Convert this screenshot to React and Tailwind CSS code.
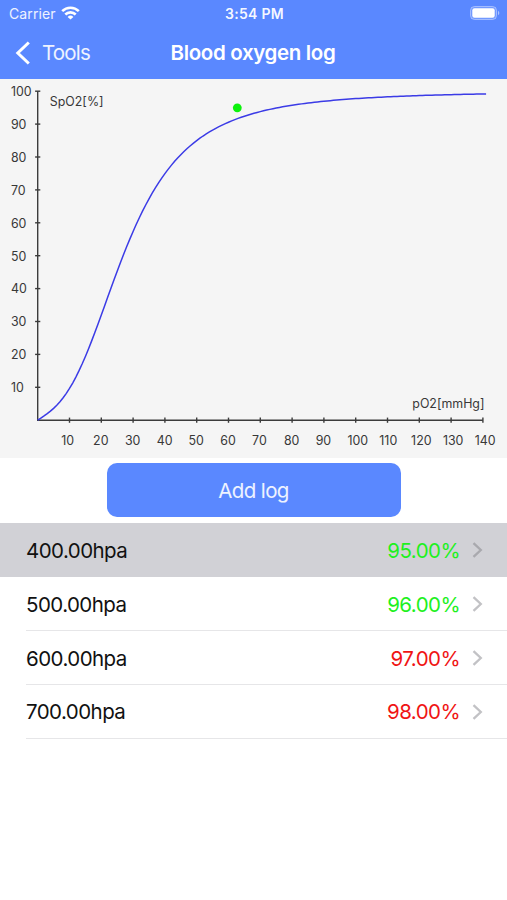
import React from 'react';

const logs = [
  { pressure: '400.00hpa', spo2: '95.00%', ok: true, selected: true },
  { pressure: '500.00hpa', spo2: '96.00%', ok: true },
  { pressure: '600.00hpa', spo2: '97.00%', ok: false },
  { pressure: '700.00hpa', spo2: '98.00%', ok: false },
];

// Chart geometry, in pixels inside the plot
const X0 = 37.7;
const Y0 = 341.2;
const STEP_X = 31.8;
const STEP_Y = 32.9;

// Severinghaus oxygen dissociation curve, result in percent
const saturation = (p) => {
  const k = p * p * p + 150 * p;
  return (100 * k) / (k + 23400);
};

const curvePoints = () => {
  const points = [];
  for (let p = 0; p <= 141; p += 1) {
    const x = X0 + (p / 10) * STEP_X;
    const y = Y0 - (saturation(p) / 10) * STEP_Y;
    points.push(`${x.toFixed(2)},${y.toFixed(2)}`);
  }
  return points.join(' ');
};

const StatusBar = () => (
  <div className="grid h-[27px] grid-cols-3 items-center pr-[7px] pl-[9px] text-[14px]">
    <div className="flex items-center gap-[5px]">
      <span className="pb-px tracking-[0.1px] text-white/90">Carrier</span>
      <svg className="-mt-px" width="19" height="14" viewBox="0 0 19 14" fill="none" stroke="white" strokeWidth="2.6">
        <path d="M1.2 5.2a11.8 11.8 0 0 1 16.6 0" />
        <path d="M4.3 8.5a7.4 7.4 0 0 1 10.4 0" />
        <path d="M9.5 13.6L6.6 10.9a4.1 4.1 0 0 1 5.8 0z" fill="white" stroke="none" />
      </svg>
    </div>
    <span className="pb-px text-center font-semibold tracking-[0.3px] whitespace-nowrap text-white/95">3:54 PM</span>
    <svg className="-mt-px justify-self-end" width="30" height="14" viewBox="0 0 30 14">
      <rect x="0.5" y="0.5" width="26" height="13" rx="4" fill="white" fillOpacity="0.15" stroke="white" strokeOpacity="0.4" />
      <rect x="2.3" y="2.3" width="22.4" height="9.4" rx="2.2" fill="white" />
      <path d="M28 4.8v4.4c1.8-.8 1.8-3.6 0-4.4z" fill="white" fillOpacity="0.5" />
    </svg>
  </div>
);

const NavBar = () => (
  <div className="grid h-[52px] grid-cols-[1fr_auto_1fr] items-center pr-[16px] pl-[15px]">
    <div className="flex items-center gap-[11px]">
      <svg className="-mt-px" width="16" height="24" viewBox="0 0 16 24" fill="none" stroke="white" strokeWidth="3">
        <path d="M13.8 1.5L2.8 12l11 10.5" />
      </svg>
      <span className="text-[20.5px] tracking-[-0.8px] text-white/90">Tools</span>
    </div>
    <h1 className="text-[20.5px] font-semibold tracking-[-0.35px]">Blood oxygen log</h1>
  </div>
);

const SaturationChart = () => {
  const xTicks = Array.from({ length: 14 }, (_, i) => i + 1);
  const yTicks = Array.from({ length: 10 }, (_, i) => i + 1);

  return (
    <svg className="block bg-[#f5f5f5]" width="507" height="379" viewBox="0 0 507 379">
      <g stroke="#3c3c3c" strokeWidth="1.4">
        <path d={`M${X0} ${Y0 - 10 * STEP_Y}V${Y0}H${X0 + 14 * STEP_X}`} fill="none" />
        {xTicks.map((i) => (
          <path key={i} d={`M${X0 + i * STEP_X} ${Y0 - 2.6}v5.2`} />
        ))}
        {yTicks.map((i) => (
          <path key={i} d={`M${X0 - 2.6} ${Y0 - i * STEP_Y}h5.2`} />
        ))}
      </g>
      <g fill="#383838" fontSize="12.4">
        {xTicks.map((i) => (
          <text key={i} x={61.3 + (i - 1) * STEP_X} y="365.5">{i * 10}</text>
        ))}
        {yTicks.map((i) => (
          <text key={i} x="10.9" y={Y0 + 4.8 - i * STEP_Y}>{i * 10}</text>
        ))}
        <text x="49.8" y="27">SpO2[%]</text>
        <text x="412.3" y="329">pO2[mmHg]</text>
      </g>
      <polyline points={curvePoints()} fill="none" stroke="#3b3be6" strokeWidth="1.5" />
      <circle cx="237.3" cy="28.8" r="4.4" fill="#0cf20c" />
    </svg>
  );
};

const LogRow = ({ log }) => (
  <li className={log.selected ? 'bg-[#d1d1d6]' : 'bg-white'}>
    <div className={`ml-[26px] flex h-[53.8px] items-center border-b pr-[24px] text-[20.5px] tracking-[-0.55px] ${log.selected ? 'border-[#d1d1d6]' : 'border-[#e6e6e8]'}`}>
      <span className="flex-1 pt-[3px] text-[#111]">{log.pressure}</span>
      <span className={`pt-[3px] ${log.ok ? 'text-[#1ef01e]' : 'text-[#f01414]'}`}>{log.spo2}</span>
      <svg className="ml-[12px] mt-px" width="11" height="16" viewBox="0 0 11 16" fill="none" stroke={log.selected ? '#a9a9ae' : '#c2c2c5'} strokeWidth="2.3">
        <path d="M1.5 1.2L8.8 8l-7.3 6.8" />
      </svg>
    </div>
  </li>
);

export default function App() {
  return (
    <div className="h-[900px] w-[507px] overflow-hidden bg-white font-['Inter',sans-serif]">
      <header className="bg-[#5a88ff] text-white">
        <StatusBar />
        <NavBar />
      </header>
      <SaturationChart />
      <div className="flex h-[65.4px] justify-center pt-[5px]">
        <button className="h-[54px] w-[294px] rounded-[10px] bg-[#5a88ff] pt-[2px] text-[20.5px] tracking-[-0.6px] text-white/90">Add log</button>
      </div>
      <ul>
        {logs.map((log) => (
          <LogRow key={log.pressure} log={log} />
        ))}
      </ul>
    </div>
  );
}
